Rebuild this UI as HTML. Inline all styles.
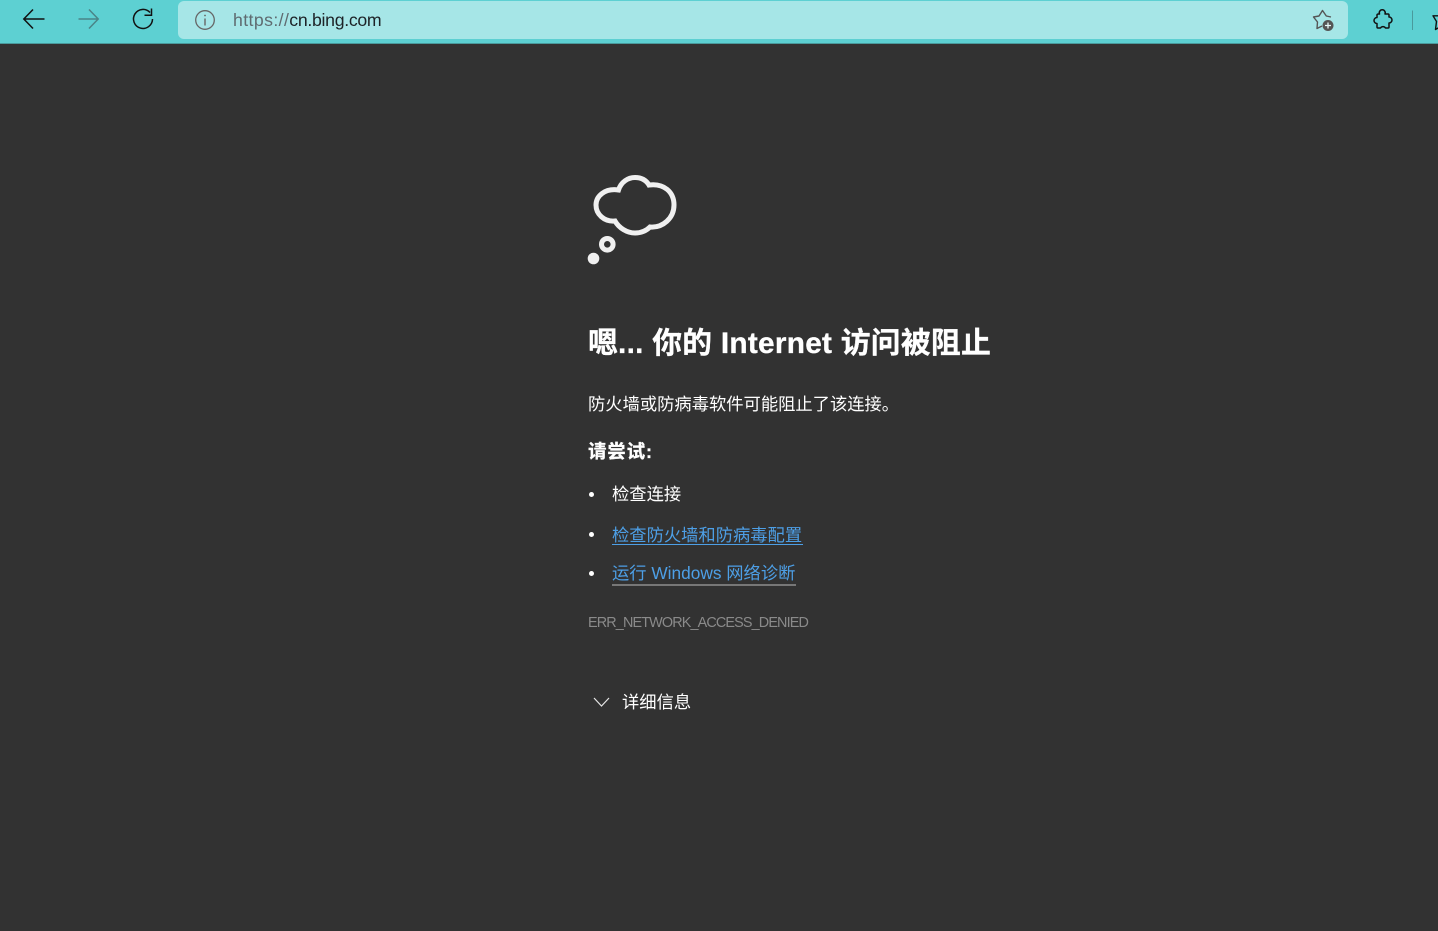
<!DOCTYPE html>
<html lang="zh-CN">
<head>
<meta charset="utf-8">
<title>cn.bing.com</title>
<style>
html,body{margin:0;padding:0;width:1438px;height:931px;overflow:hidden;background:#323232;}
body{position:relative;font-family:"Liberation Sans","Noto Sans CJK SC",sans-serif;color:#fff;}
.t{position:absolute;white-space:nowrap;line-height:24px;font-size:17.3px;}
#bar{position:absolute;left:0;top:0;width:1438px;height:43px;background:#5dd0d2;border-bottom:1px solid #4a9a9c;box-sizing:content-box;}
#addr{position:absolute;left:178px;top:1px;width:1170px;height:38px;background:#a6e6e7;border-radius:6px;}
svg{position:absolute;overflow:visible;}
.dot{position:absolute;left:589px;width:5px;height:5px;border-radius:50%;background:#fff;}
a{color:#4d9fe6;text-decoration:none;}
.ul{position:absolute;height:1px;background:#4d9fe6;}
</style>
</head>
<body>
<div id="bar"></div>
<div id="addr"></div>

<svg style="left:0;top:0" width="1438" height="44" fill="none">
  <path d="M24 19H44.5M33 9.5L23.8 19L33 28.5" stroke="#111" stroke-width="1.5"/>
  <path d="M78.5 19H98M89 9.5L98.2 19L89 28.5" stroke="#4a8487" stroke-width="1.5"/>
  <path d="M150 12.500A9.500 9.500 0 1 0 152.500 19" stroke="#111" stroke-width="1.5"/>
  <path d="M144.500 15.300H151.500V8.500" stroke="#111" stroke-width="1.5"/>
  <circle cx="205" cy="20" r="9.3" stroke="#666" stroke-width="1.3"/>
  <path d="M205 18.5V25.5" stroke="#666" stroke-width="1.4"/>
  <circle cx="205" cy="15.5" r="0.9" fill="#666"/>
  <path d="M1331 17L1326.300 16L1322.500 10.500L1319 16L1313.500 17L1317.500 22L1317 28.500L1322 26" stroke="#555" stroke-width="1.4" stroke-linejoin="round"/>
  <circle cx="1328" cy="25.500" r="5.500" fill="#555"/>
  <path d="M1325 25.500H1331M1328 22.500V28.500" stroke="#e8f8f8" stroke-width="1.300"/>
  <path d="M1378.500 14H1379.500A3 3 0 1 1 1385 14H1388Q1389 14 1389 15V17A3 3 0 1 1 1389 23V27Q1389 28 1388 28H1385.500A2.900 2.900 0 0 0 1380.500 28H1378Q1377 28 1377 27V23.500A3 3 0 1 1 1377 17.500V15Q1377 14 1378.500 14Z" stroke="#111" stroke-width="1.500" stroke-linejoin="round"/>
  <path d="M1412.500 10.500V30" stroke="#4a9a9c" stroke-width="1"/>
  <path d="M1439 15.800H1433L1436.500 21.500L1435.500 29.500L1439 27.500" stroke="#111" stroke-width="1.400" stroke-linejoin="round"/>
</svg>

<div class="t" style="left:233px;top:8px;font-size:17.700px;color:#5f6b70;"><span style="letter-spacing:0.400px">https://</span><span style="color:#1d2327;letter-spacing:-0.300px">cn.bing.com</span></div>

<svg style="left:580px;top:170px" width="110" height="100" fill="none">
  <path d="M38.500 20C41 12 48 7.500 55 7.500C61 7.500 66 10 69 15C84 13 94 22 94 35C94 48 83 58 70 57C66 61 61 63 55 63C47 63 39 58 35 51C24 52 16 44 16 35C16 26 25 18 38.500 20Z" stroke="#f0f0f0" stroke-width="5"/>
  <circle cx="27.300" cy="74.300" r="5.800" stroke="#f0f0f0" stroke-width="5"/>
  <circle cx="13.500" cy="88.500" r="5.800" fill="#f0f0f0"/>
</svg>

<div class="t" style="left:588px;top:326px;font-size:29.800px;line-height:36px;font-weight:bold;letter-spacing:0.260px;-webkit-text-stroke:0.300px #fff;">嗯... 你的 Internet 访问被阻止</div>

<div class="t" style="left:588px;top:392px;">防火墙或防病毒软件可能阻止了该连接。</div>
<div class="t" style="left:588px;top:440px;font-weight:bold;letter-spacing:0.800px;font-size:18.500px;-webkit-text-stroke:0.300px #fff;">请尝试:</div>

<div class="dot" style="top:492px"></div>
<div class="t" style="left:612px;top:482px;">检查连接</div>

<div class="dot" style="top:531.500px"></div>
<div class="t" style="left:612px;top:523px;"><a>检查防火墙和防病毒配置</a></div>
<div class="ul" style="left:612px;top:544px;width:191px;"></div>

<div class="dot" style="top:571px"></div>
<div class="t" style="left:612px;top:561px;"><a>运行 Windows 网络诊断</a></div>
<div class="ul" style="left:612px;top:584px;width:184px;height:2px;background:#777;"></div>

<div class="t" style="left:588px;top:611px;font-size:14.400px;color:#8a8a8a;letter-spacing:-0.860px;">ERR_NETWORK_ACCESS_DENIED</div>

<svg style="left:590px;top:692px" width="24" height="20" fill="none">
  <path d="M4 6L11.500 14L19 6" stroke="#e6e6e6" stroke-width="1.200"/>
</svg>
<div class="t" style="left:622px;top:690px;">详细信息</div>
</body>
</html>
